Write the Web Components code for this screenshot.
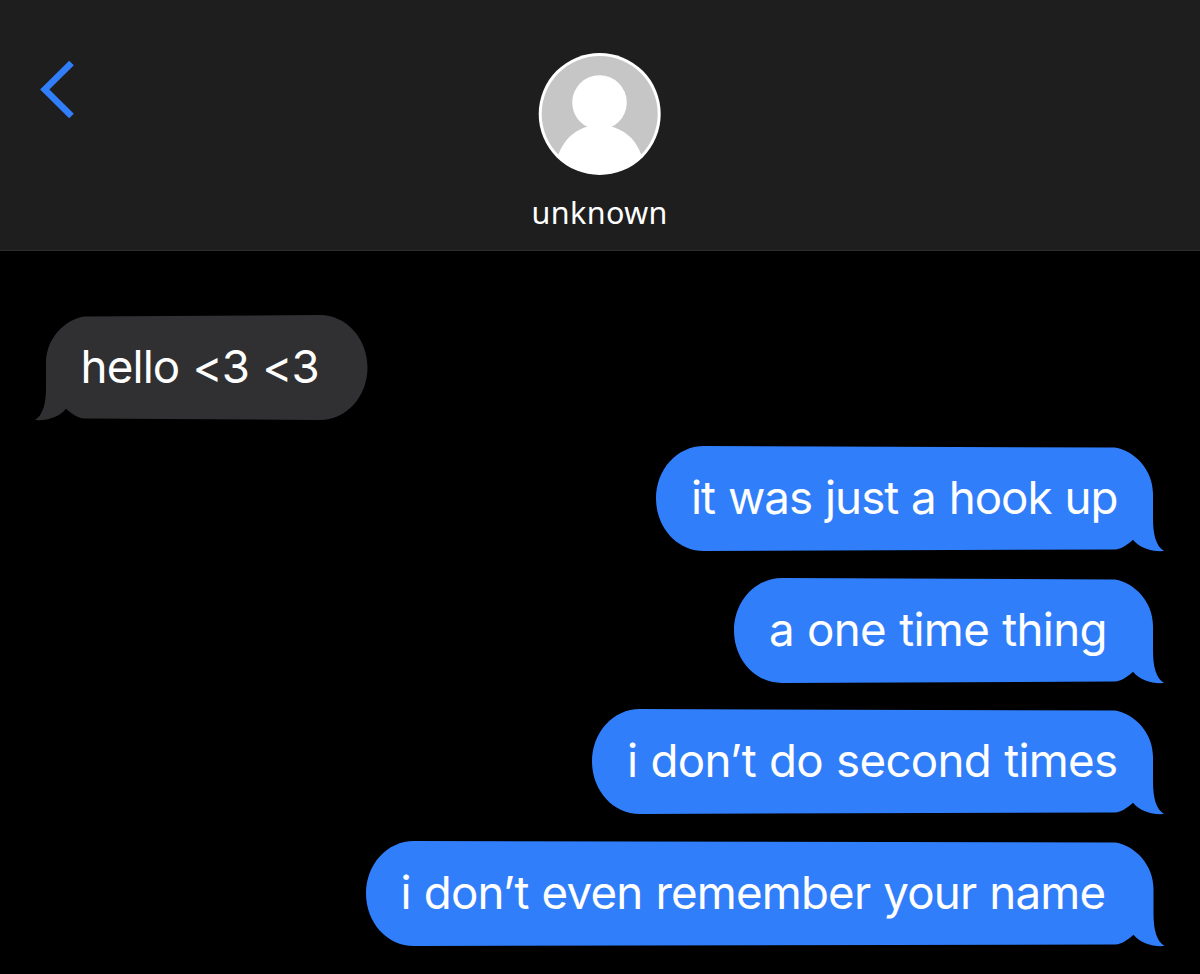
<!DOCTYPE html>
<html lang="en">
<head>
<meta charset="utf-8">
<title>Messages</title>
<style>
html,body{margin:0;height:100%;background:#000;overflow:hidden}
body{font-family:Inter,"Noto Sans",sans-serif;font-weight:400;color:#fff}
</style>
</head>
<body>
<chat-screen>
  <chat-header slot="header"><fit-text size="30.5" start="1" ink="132" face="Noto Sans">unknown</fit-text></chat-header>
  <chat-bubble side="in" width="332.500"><fit-text size="45.700" start="48.500" ink="234">hello &lt;3 &lt;3</fit-text></chat-bubble>
  <chat-bubble side="out" width="508"><fit-text size="45.700" start="37" ink="423.500">it was just a hook up</fit-text></chat-bubble>
  <chat-bubble side="out" width="430"><fit-text size="45.700" start="37" ink="333.500">a one time thing</fit-text></chat-bubble>
  <chat-bubble side="out" width="572"><fit-text size="45.700" start="37" ink="487">i don’t do second times</fit-text></chat-bubble>
  <chat-bubble side="out" width="798.5"><fit-text size="45.700" start="37" ink="702">i don’t even remember your name</fit-text></chat-bubble>
</chat-screen>
<script>
// A single line whose tracking is adjusted so its ink spans a given width.
class FitText extends HTMLElement {
  connectedCallback() {
    const root = this.attachShadow({mode: 'open'});
    root.innerHTML = `<style>
      :host{display:block;white-space:nowrap;font-kerning:normal;word-spacing:1px}
    </style><slot></slot>`;
    const size = +this.getAttribute('size'), start = +this.getAttribute('start');
    const family = `"${this.getAttribute('face') || 'Inter'}", sans-serif`;
    const text = this.textContent;
    const ctx = document.createElement('canvas').getContext('2d');
    ctx.font = `400 ${size}px ${family}`;
    const m = ctx.measureText(text);
    const ink = m.actualBoundingBoxRight + m.actualBoundingBoxLeft + text.split(' ').length - 1;
    this.style.fontFamily = family;
    this.style.fontSize = size + 'px';
    this.style.letterSpacing = (this.getAttribute('ink') - ink) / (text.length - 1) + 'px';
    this.style.marginLeft = start + m.actualBoundingBoxLeft + 'px';
  }
}
class ChatScreen extends HTMLElement {
  constructor() {
    super();
    this.attachShadow({mode: 'open'}).innerHTML = `<style>
      :host{display:flex;flex-direction:column;width:1200px;height:974px;background:#000;overflow:hidden}
      main{display:flex;flex-direction:column;gap:26.5px;padding:63.5px 36px 0 35px}
    </style><slot name="header"></slot><main><slot></slot></main>`;
  }
}
class ChatHeader extends HTMLElement {
  constructor() {
    super();
    this.attachShadow({mode: 'open'}).innerHTML = `<style>
      :host{display:grid;grid-template-columns:1fr 135px 1fr;height:250px;background:#1e1e1e;border-bottom:1px solid #2d2d2d;flex:none}
      .back{display:block;margin:60px 0 0 38px}
      .person{display:flex;flex-direction:column;padding-top:52px}
      .avatar{display:block;margin-left:5px}
      .name{line-height:38px;margin-top:16.5px}
    </style>
    <svg class="back" width="40" height="60" viewBox="0 0 40 60"><path d="M33.500 3L6.800 29.500L33.500 56" fill="none" stroke="#317efb" stroke-width="6.600"/></svg>
    <div class="person">
      <svg class="avatar" width="124" height="124" viewBox="0 0 124 124">
        <defs><clipPath id="c"><circle cx="62" cy="62" r="60"/></clipPath></defs>
        <circle cx="61.700" cy="62" r="61" fill="#fff"/><circle cx="61.700" cy="62" r="58" fill="#c6c6c6"/>
        <g fill="#fff" clip-path="url(#c)"><circle cx="61.500" cy="50.5" r="27.3"/>
        <path d="M46.500 75.500Q61.500 70 76.500 75.500C89.500 80 98 89 103 102L103 124H21L20.500 102C26 89 34 80 46.500 75.500Z"/></g>
      </svg>
      <div class="name"><slot></slot></div>
    </div>`;
  }
}
class ChatBubble extends HTMLElement {
  connectedCallback() {
    const w = +this.getAttribute('width'), out = this.getAttribute('side') === 'out';
    const shape = `M48 0L${w-49} 1.500C${w-29} 5 ${w-11} 24 ${w-11} 48V72C${w-11} 89 ${w-8} 100 ${w} 105
      C${w-12} 106 ${w-24} 102 ${w-31} 93.700C${w-37} 99 ${w-43} 103 ${w-49} 103.500L48 105C21 105 0 81.500 0 52.500S21 0 48 0Z`;
    this.attachShadow({mode: 'open'}).innerHTML = `<style>
      :host{display:grid;width:${w}px;height:105px;flex:none;align-self:${out ? 'flex-end' : 'flex-start'}}
      svg,.text{grid-area:1/1}
      svg{display:block;overflow:visible;${out ? '' : 'transform:scaleX(-1)'}}
      .text{line-height:103.5px;z-index:1}
    </style>
    <svg width="${w}" height="105"><path d="${shape}" fill="${out ? '#317efb' : '#303032'}"/></svg>
    <div class="text"><slot></slot></div>`;
  }
}
customElements.define('fit-text', FitText);
customElements.define('chat-screen', ChatScreen);
customElements.define('chat-header', ChatHeader);
customElements.define('chat-bubble', ChatBubble);
</script>
</body>
</html>
